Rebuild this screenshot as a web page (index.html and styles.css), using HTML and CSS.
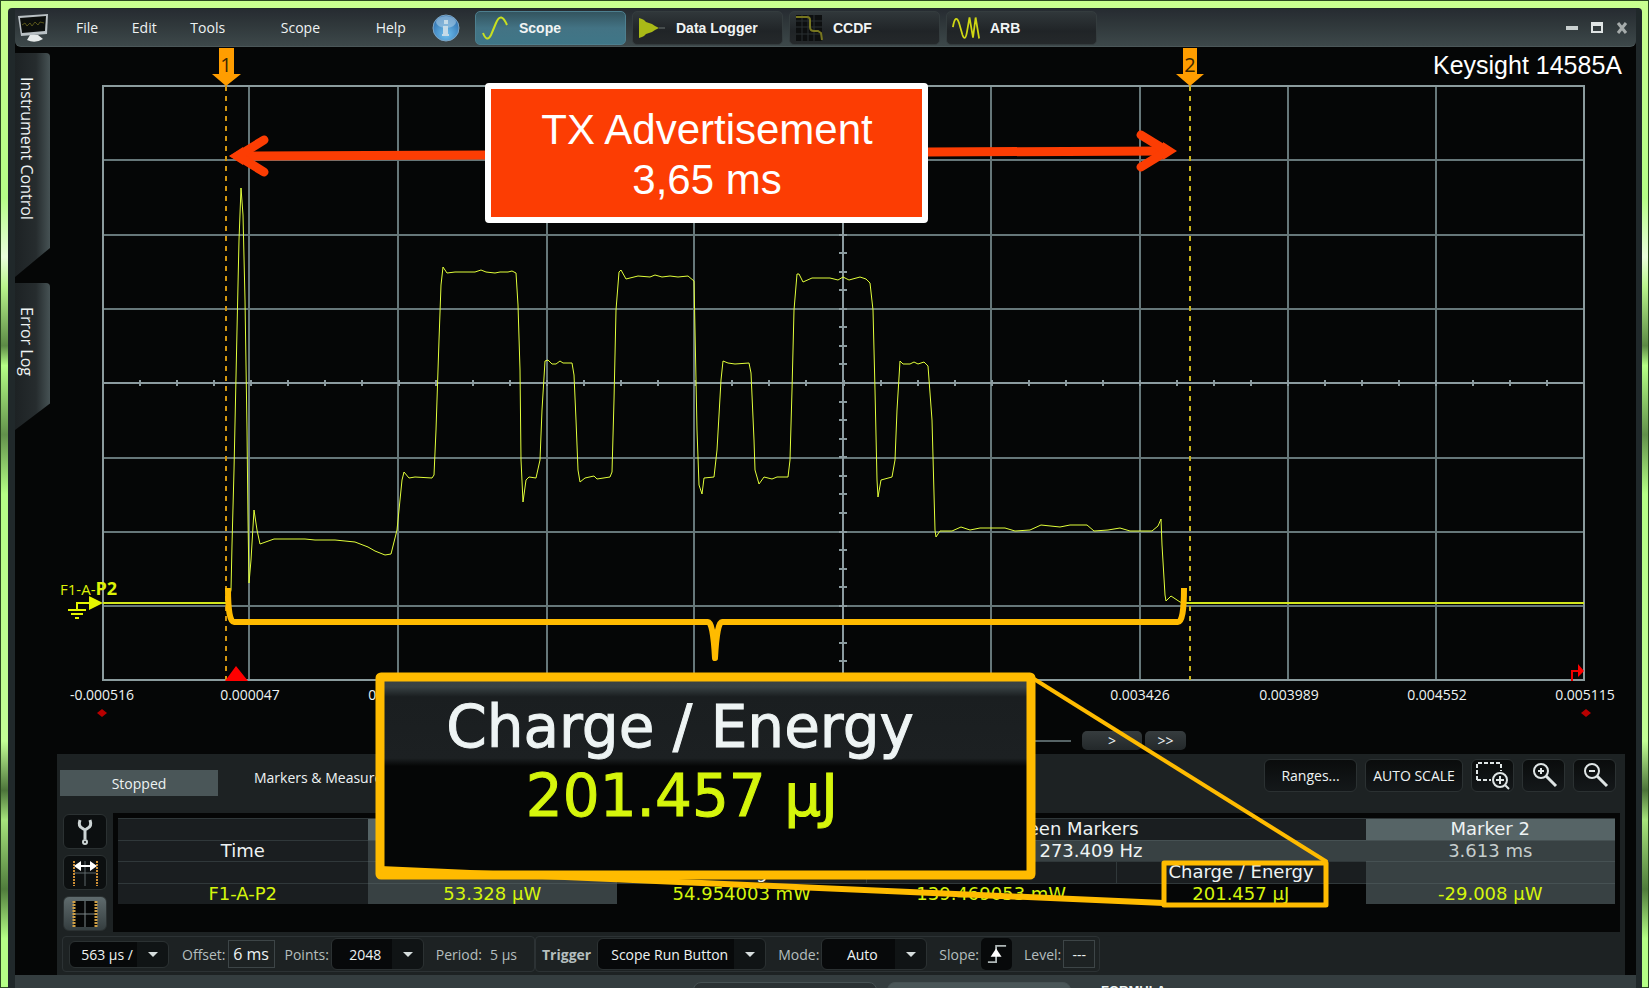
FILE: index.html
```html
<!DOCTYPE html>
<html lang="en">
<head>
  <meta charset="UTF-8">
  <title>Keysight 14585A</title>
  <link rel="stylesheet" href="styles.css">
</head>
<body>
<div class="window">

  <header class="titlebar">
    <svg class="app-icon" viewBox="0 0 32 30">
      <path d="M1 3L31 1L30 21L4 23Z" fill="#b9c0c4"/>
      <path d="M3 5L29 3L28 18L5 20Z" fill="#0c0f0d"/>
      <path d="M5 12l3-2 2 3 3-3 2 3 3-4 3 3 2-3 4 1" fill="none" stroke="#57541a"/>
      <path d="M13 22h8l5 4q-8 5-16 1z" fill="#e6eaea"/>
    </svg>
    <nav class="menu">
      <button>File</button>
      <button>Edit</button>
      <button>Tools</button>
      <button class="wide">Scope</button>
      <button class="wide">Help</button>
    </nav>
    <svg class="info" viewBox="0 0 28 28">
      <defs>
        <radialGradient id="infoFill" cx="50%" cy="75%" r="70%">
          <stop offset="0" stop-color="#6fc0ee"/>
          <stop offset="1" stop-color="#2f6fae"/>
        </radialGradient>
      </defs>
      <circle cx="14" cy="14" r="13" fill="url(#infoFill)" stroke="#7fa6c4"/>
      <ellipse cx="14" cy="8" rx="10" ry="6" fill="#a9cbe4" opacity=".6"/>
      <path d="M12 6h4v4h-4zM11 12h5v8h1v2h-7v-2h1v-6z" fill="#c5dbe8"/>
    </svg>
    <div class="modes">
      <button class="mode active">
        <svg viewBox="0 0 28 28"><path d="M2 19q4 10 8 2L15 9q5-12 11 2" fill="none" stroke="#c8e020" stroke-width="2"/></svg>
        Scope
      </button>
      <button class="mode">
        <svg viewBox="0 0 28 28"><path d="M1 4l3 1 2 1 2 2 3 1 3 1 3 2 4 2-4 2-3 2-3 1-3 1-2 2-2 1-3 1z" fill="#a9ba17"/><path d="M21 14h6" stroke="#6a7270"/></svg>
        Data Logger
      </button>
      <button class="mode">
        <svg viewBox="0 0 28 28"><rect x="1" y="1" width="26" height="26" fill="#0d0f10"/><path d="M7 1v26M13 1v26M19 1v26M1 7h26M1 13h26M1 20h26" stroke="#2b3032"/><path d="M1 3h11q3 0 3 3v7q0 4 4 4h4l3 2 1 7" fill="none" stroke="#77761f" stroke-width="2"/></svg>
        CCDF
      </button>
      <button class="mode">
        <svg viewBox="0 0 32 28"><path d="M1 13Q4-3 8 8l4 14q3 8 5-3l3-17 4 23 3-23 4 24" fill="none" stroke="#cfd814" stroke-width="2"/></svg>
        ARB
      </button>
    </div>
    <div class="window-buttons">
      <button aria-label="Minimize"><svg viewBox="0 0 12 12"><path d="M0 6h12" stroke="#c9d0d0" stroke-width="4"/></svg></button>
      <button aria-label="Maximize"><svg viewBox="0 0 12 12"><path d="M1 1h10v9H1zM1 3h10" fill="none" stroke="#dfe4e4" stroke-width="2"/></svg></button>
      <button aria-label="Close"><svg viewBox="0 0 12 12"><path d="M2 1l8 10M10 1L2 11" stroke="#a5abab" stroke-width="3"/></svg></button>
    </div>
  </header>

  <div class="workspace">
    <aside class="side-tabs">
      <button class="side-tab tall">Instrument Control</button>
      <button class="side-tab">Error Log</button>
    </aside>

    <main class="main">
      <svg class="plot" viewBox="57 47 1568 680">
        <!-- grid -->
        <path class="grid" d="M249 86V680M398 86V680M547 86V680M694 86V680M991 86V680M1140 86V680M1288 86V680M1436 86V680
          M103 160H1584M103 235H1584M103 309H1584M103 458H1584M103 532H1584M103 606H1584"/>
        <rect class="frame" x="103" y="86" width="1481" height="594"/>
        <path class="axis" d="M843 86V680M103 383H1584"/>
        <g id="ticks" class="axis"></g>

        <!-- marker lines -->
        <path class="marker-line" d="M226 86V680"/>
        <path class="marker-line second" d="M1190 86V680"/>

        <!-- power trace -->
        <path class="base" d="M103 603H228M1184 603H1584"/>
        <polyline class="trace" points="228,603 231,590 232,545 234,470 237,330 239,240 241,188 243,215 245,300 247,430 248,520 249,583 251,560 254,510 257,530 260,544
          274,539 305,539 315,540 335,540 355,542 368,547 375,551 385,555 391,554 397,530 402,480 404,472 409,478 415,477 432,478 434,475 436,430 439,340 441,285 443,267
          447,273 455,272 475,272 481,270 486,272 495,273 500,272 508,272 512,271 516,273 518,305 520,370 521,460 523,502 526,480 529,477 536,478 540,460 542,410 545,361 548,360 552,364 556,364 560,361 563,363 572,363
          574,375 576,420 578,470 580,482 585,478 594,476 597,479 610,477 612,472 614,400 616,310 619,272 621,270 626,279 638,276 650,277 655,275 662,277 670,276 678,277 688,276 694,281 695,330 697,430 699,485 702,494 704,478 714,477
          717,450 721,380 723,361 728,363 735,364 749,363 751,373 754,440 755,470 759,484 764,477 772,479 777,477 788,477 790,460 792,390 794,310 797,274 799,274 803,282 812,278
          830,278 838,280 843,277 849,280 860,277 866,279 870,283 873,310 875,390 877,480 878,497 881,480 892,477 895,460 897,410 900,361 903,364 910,364 914,362 918,364 924,362 928,366
          932,420 935,530 936,537 940,531 952,531 961,527 970,530 980,528 1005,528 1015,531 1030,530 1041,525 1060,527 1070,525 1087,525 1094,531 1108,530 1120,528 1130,531 1152,531
          1158,526 1161,519 1162,545 1165,595 1166,601 1171,596 1180,602 1184,603"/>

        <!-- marker flags -->
        <path class="flag" d="M219 48h15v26h7l-15 12-14-12h7z"/>
        <text class="flag-text" x="226" y="72">1</text>
        <path class="flag" d="M1183 48h14v26h7l-14 12-14-12h7z"/>
        <text class="flag-text" x="1190" y="72">2</text>

        <!-- channel ground -->
        <text class="channel" x="60" y="595">F1-A-<tspan class="strong">P2</tspan></text>
        <path class="ground" d="M77 610v-7h13M68 610h18M71 614h12M75 618h4"/>
        <path class="ground-head" d="M89 596l14 7-14 7z"/>

        <path class="red" d="M236 666l12 15h-23zM1578 664l6 7-6 6z"/>
        <path class="red dim" d="M102 709l5 4-5 4-5-4zM1586 709l5 4-5 4-5-4z"/>
        <path class="red-line" d="M1572 681v-10h8"/>

        <g class="axis-labels">
          <text x="102" y="700">-0.000516</text>
          <text x="250" y="700">0.000047</text>
          <text x="398" y="700">0.000610</text>
          <text x="1140" y="700">0.003426</text>
          <text x="1289" y="700">0.003989</text>
          <text x="1437" y="700">0.004552</text>
          <text x="1585" y="700">0.005115</text>
        </g>
        <text class="product" x="1622" y="74">Keysight 14585A</text>
      </svg>

      <div class="scroll-row">
        <span class="track"></span>
        <button class="step long">&gt;</button>
        <button class="step">&gt;&gt;</button>
      </div>

      <section class="panel">
        <div class="panel-head">
          <button class="status">Stopped</button>
          <h2>Markers &amp; Measurements</h2>
          <div class="tools">
            <button class="tool ranges">Ranges...</button>
            <button class="tool auto">AUTO SCALE</button>
            <button class="tool icon" aria-label="Zoom to area"><svg viewBox="0 0 34 30"><path d="M1 19V2h24v8M1 19h14" fill="none" stroke="#dfe5e5" stroke-width="2" stroke-dasharray="4 2"/><circle cx="24" cy="19" r="7" fill="none" stroke="#dfe5e5" stroke-width="2"/><path d="M24 15v8M20 19h8M29 24l4 4" stroke="#dfe5e5" stroke-width="2"/></svg></button>
            <button class="tool icon" aria-label="Zoom in"><svg viewBox="0 0 34 30"><circle cx="14" cy="10" r="7" fill="none" stroke="#dfe5e5" stroke-width="2"/><path d="M14 7v6M11 10h6" stroke="#dfe5e5" stroke-width="2"/><path d="M19 15l10 10" stroke="#dfe5e5" stroke-width="3"/></svg></button>
            <button class="tool icon" aria-label="Zoom out"><svg viewBox="0 0 34 30"><circle cx="14" cy="10" r="7" fill="none" stroke="#dfe5e5" stroke-width="2"/><path d="M11 10h6" stroke="#dfe5e5" stroke-width="2"/><path d="M19 15l10 10" stroke="#dfe5e5" stroke-width="3"/></svg></button>
          </div>
        </div>

        <div class="measure">
          <div class="measure-tools">
            <button aria-label="Setup"><svg viewBox="0 0 30 30"><path d="M10 3q-2 6 2 8l3 2 3-2q4-2 2-8M15 12v10" fill="none" stroke="#cdd5d5" stroke-width="3"/><circle cx="15" cy="25" r="2" fill="none" stroke="#cdd5d5" stroke-width="2"/></svg></button>
            <button aria-label="Place markers"><svg viewBox="0 0 30 30"><path d="M15 3v25M4 15h22" stroke="#5d6769"/><path d="M4 3v25M27 3v25" stroke="#cf8f35" stroke-width="2" stroke-dasharray="2 1"/><path d="M4 8l7-5v4h9V3l7 5-7 5V9h-9v4z" fill="#fff"/></svg></button>
            <button class="on" aria-label="Show markers"><svg viewBox="0 0 30 30"><path d="M4 2h23v26H4z" fill="#050606"/><path d="M15 2v26M4 15h22" stroke="#7c8688"/><path d="M4 2v26M26 2v26" stroke="#cf9f45" stroke-width="3" stroke-dasharray="2 1"/></svg></button>
          </div>
          <div class="table-box">
            <table>
              <tr>
                <th></th><th class="lit">Marker 1</th><th colspan="3">Measurements Between Markers</th><th class="lit">Marker 2</th>
              </tr>
              <tr>
                <th>Time</th><td class="mid">-44.52 µs</td><td class="mid" colspan="3">Δ = 3.658 ms, Freq = 273.409 Hz</td><td class="mid soft">3.613 ms</td>
              </tr>
              <tr>
                <th></th><td class="mid"></td><th>Average</th><th class="split">Maximum</th><th class="split">Charge / Energy</th><td class="mid"></td>
              </tr>
              <tr class="values">
                <th>F1-A-P2</th><td class="mid">53.328 µW</td><td class="dark">54.954003 mW</td><td class="dark">139.469053 mW</td><td class="dark">201.457 µJ</td><td class="mid">-29.008 µW</td>
              </tr>
            </table>
          </div>
        </div>

        <div class="controls">
          <div class="group first">
            <span class="combo scale"><select aria-label="Time per division"><option>563 µs /</option></select></span>
            <label for="offset">Offset:</label><input id="offset" class="offset" value="6 ms">
            <label for="points">Points:</label><span class="combo points"><select id="points"><option>2048</option></select></span>
            <span class="period">Period:</span><span class="period-value">5 µs</span>
          </div>
          <div class="group">
            <label class="bold" for="trigger">Trigger</label><span class="combo trigger"><select id="trigger"><option>Scope Run Button</option></select></span>
            <label for="mode">Mode:</label><span class="combo mode-select"><select id="mode"><option>Auto</option></select></span>
            <label for="slope">Slope:</label><button id="slope" class="slope" aria-label="Slope: rising"><svg viewBox="0 0 22 22"><path d="M1 20h9V2h11" fill="none" stroke="#aeb6b6" stroke-width="2"/><path d="M10 5l6 9H4z" fill="#fff"/></svg></button>
            <label for="level">Level:</label><input id="level" class="level" value="---">
          </div>
        </div>
      </section>
    </main>
  </div>

  <footer class="bottom">
    <span class="stub"></span>
    <span class="stub light"></span>
    <span class="formula">FORMULA</span>
  </footer>
</div>

<!-- call-outs laid over the whole screen -->
<svg class="notes" viewBox="0 0 1649 988">
  <defs>
    <linearGradient id="lens" x1="0" y1="0" x2="0" y2="1">
      <stop offset="0" stop-color="#3a4345"/>
      <stop offset=".05" stop-color="#384143"/>
      <stop offset=".1" stop-color="#1a1e20"/>
      <stop offset=".41" stop-color="#1c2022"/>
      <stop offset=".45" stop-color="#050606"/>
    </linearGradient>
  </defs>
  <path class="arrow" d="M485 155L240 156M928 152L1166 151"/>
  <path class="arrow round" d="M264 140L238 156L264 172M1141 135L1167 151L1141 167"/>
  <path class="tip" d="M229 156l14-9v18zM1177 151l-14-9v18z"/>
  <rect class="tx" x="488" y="86" width="437" height="134" rx="1"/>
  <text class="tx-text" x="707" y="144">TX Advertisement</text>
  <text class="tx-text" x="707" y="194">3,65 ms</text>

  <path class="brace" d="M228 588Q228 622 234 622H708Q713 622 715 658Q717 622 722 622H1178Q1184 622 1184 588"/>

  <rect class="lens" x="380" y="677" width="651" height="198" rx="1" fill="url(#lens)"/>
  <text class="lens-title" x="680" y="747">Charge / Energy</text>
  <text class="lens-value" x="682" y="816">201.457 µJ</text>
  <rect class="pick" x="1164" y="863" width="162" height="42"/>
  <path class="leader" d="M1034 679L1327 862"/>
  <path class="leader thick" d="M380 869L1164 903"/>
</svg>

<script>
  // minor ticks on both centre axes, four per division
  const ticks = document.getElementById('ticks');
  let d = '';
  for (let i = 1; i < 40; i++) {
    const x = Math.round(103 + i * 1481 / 40);
    d += `M${x} 380v6`;
  }
  for (let i = 1; i < 32; i++) {
    const y = Math.round(86 + i * 594 / 32);
    d += `M839 ${y}h8`;
  }
  ticks.innerHTML = `<path d="${d}"/>`;
</script>
</body>
</html>
```
FILE: styles.css
```css
* {
  box-sizing: border-box;
}

body {
  margin: 0;
  height: 100vh;
  overflow: hidden;
  position: relative;
  padding: 8px 7px 0 8px;
  background: linear-gradient(#c9ff90 0, #b5ff86 20%, #eaffdc 26%, #b9f58c 29%, #5c8a45 35%, #b5ff86 37%, #62914b 44%, #b5ff86 50%, #c3ff96 75%, #4c743a 80%, #a6e47c 83%, #507c3c 90%, #b5ff86 95%);
  box-shadow: inset 0 0 0 1px #2b4a20;
  font-family: "Open Sans", "Noto Sans", sans-serif;
  font-size: 14px;
  color: #eef3f3;
}

button, select, input {
  font: inherit;
  color: inherit;
  border: 0;
  padding: 0;
  margin: 0;
  background: none;
}

.window {
  display: flex;
  flex-direction: column;
  min-height: 100%;
  border: solid #20282a;
  border-width: 1px 6px 0 7px;
  border-radius: 4px 4px 0 0;
  background: #050606;
}

/* title bar */
.titlebar {
  display: flex;
  align-items: center;
  flex: none;
  height: 38px;
  padding: 0 8px 0 2px;
  background: linear-gradient(#262b31, #2f373a 40%, #3d484a);
  border-bottom: 1px solid #4b5759;
  border-radius: 0 0 6px 6px;
}

.app-icon {
  width: 32px;
  height: 30px;
}

.menu {
  display: flex;
  justify-content: space-between;
  width: 330px;
  margin-left: 27px;
}

.menu .wide {
  margin-left: 22px;
}

.info {
  width: 28px;
  height: 28px;
  margin-left: 26px;
}

.modes {
  display: flex;
  gap: 6px;
  margin-left: 15px;
}

.mode {
  display: flex;
  align-items: center;
  gap: 10px;
  width: 151px;
  height: 34px;
  padding-left: 5px;
  border-radius: 5px;
  background: linear-gradient(#30373a, #202427 60%, #25292b);
  border: 1px solid #343c3e;
  font: bold 14px "Liberation Sans", Arial, sans-serif;
  color: #f1f4f4;
}

.mode svg {
  width: 28px;
  height: 28px;
}

.mode.active {
  background: linear-gradient(#33545f, #437384 50%, #3f7687);
  border-color: #4d7f8f;
}

.window-buttons {
  display: flex;
  gap: 13px;
  margin-left: auto;
}

.window-buttons svg {
  display: block;
  width: 12px;
  height: 12px;
}

/* side tabs */
.workspace {
  display: grid;
  grid-template-columns: 42px 1fr;
  padding-right: 11px;
}

.side-tabs {
  display: flex;
  flex-direction: column;
  gap: 6px;
  padding-top: 6px;
}

.side-tab {
  width: 35px;
  height: 147px;
  padding-top: 24px;
  padding-right: 12px;
  writing-mode: vertical-rl;
  text-align: left;
  line-height: 20px;
  background: linear-gradient(90deg, #1d2224, #262c2e 60%, #465254);
  border-radius: 0 4px 0 0;
  clip-path: polygon(0 0, 100% 0, 100% 82%, 0 100%);
  font-size: 16px;
}

.side-tab.tall {
  height: 224px;
  clip-path: polygon(0 0, 100% 0, 100% 87%, 0 100%);
}

/* plot */
.main {
  min-width: 0;
}

.plot {
  display: block;
  width: 100%;
}

.grid, .frame, .axis {
  fill: none;
  stroke: #667779;
  stroke-width: 2;
}

.frame {
  stroke: #8b9b9d;
}

.axis {
  stroke: #8b9b9f;
}

.marker-line {
  stroke: #d3960f;
  stroke-width: 2;
  stroke-dasharray: 5 5;
}

.marker-line.second {
  stroke: #c9b21c;
}

.trace {
  fill: none;
  stroke: #e2ff3a;
  stroke-width: 1;
  stroke-linejoin: round;
}

.base {
  stroke: #d2e51c;
  stroke-width: 2;
}

.flag {
  fill: #ff9d00;
}

.flag-text {
  font-size: 20px;
  text-anchor: middle;
  fill: #3b2600;
}

.channel {
  font-size: 15px;
  fill: #ddf207;
}

.channel .strong {
  font-size: 18px;
  font-weight: bold;
}

.ground {
  fill: none;
  stroke: #e4f500;
  stroke-width: 2;
}

.ground-head {
  fill: #e4f500;
}

.red {
  fill: #f00;
}

.red.dim {
  fill: #b80000;
}

.red-line {
  fill: none;
  stroke: #e00;
  stroke-width: 2;
}

.axis-labels {
  font-size: 14px;
  text-anchor: middle;
  fill: #eef3f3;
}

.product {
  font: 25px "Liberation Sans", Arial, sans-serif;
  text-anchor: end;
  fill: #fff;
}

.scroll-row {
  display: flex;
  align-items: center;
  justify-content: flex-end;
  gap: 3px;
  height: 27px;
  padding-right: 28%;
}

.track {
  width: 400px;
  height: 2px;
  margin-right: 8px;
  background: #566365;
}

.step {
  width: 41px;
  height: 19px;
  line-height: 17px;
  border-radius: 5px;
  background: linear-gradient(#363c3e, #23282a);
  font-size: 14px;
}

.step.long {
  width: 60px;
}

/* lower panel */
.panel {
  height: 221px;
  padding: 0 5px 0 3px;
  background: #1d2223;
}

.panel-head {
  display: flex;
  height: 59px;
}

.status {
  width: 158px;
  height: 26px;
  margin-top: 16px;
  background: #4a5658;
}

.panel-head h2 {
  margin: 14px 0 0 36px;
  font-size: 14px;
  line-height: 20px;
  font-weight: normal;
}

.tools {
  display: flex;
  gap: 8px;
  margin: 5px 4px 0 auto;
}

.tool {
  height: 33px;
  border: 1px solid #2b3132;
  border-radius: 6px;
  background: linear-gradient(#0a0c0c, #14181a);
}

.tool.ranges {
  width: 93px;
}

.tool.auto {
  width: 98px;
}

.tool.icon {
  width: 43px;
}

.tool svg {
  display: block;
  width: 34px;
  height: 30px;
  margin: auto;
}

.measure {
  display: flex;
  height: 119px;
}

.measure-tools {
  display: flex;
  flex-direction: column;
  justify-content: space-between;
  width: 44px;
  margin: 1px 6px 1px 3px;
}

.measure-tools button {
  height: 35px;
  border: 1px solid #2b3132;
  border-radius: 6px;
  background: #0c0f10;
}

.measure-tools .on {
  background: linear-gradient(#5f6b6d, #353e40);
}

.measure-tools svg {
  display: block;
  width: 30px;
  height: 30px;
  margin: auto;
}

.table-box {
  flex: 1;
  padding: 5px;
  background: #050606;
}

table {
  width: 100%;
  height: 86px;
  table-layout: fixed;
  border-collapse: collapse;
  font: 18px "DejaVu Sans", Verdana, sans-serif;
  line-height: 20px;
}

th, td {
  padding: 0;
  font-weight: normal;
  text-align: center;
  white-space: nowrap;
  border-top: 1px solid #30383a;
  background: #1a1e20;
}

.lit {
  background: #566466;
}

.mid {
  background: #384143;
  border-color: #465153;
}

.soft {
  color: #c5cdcd;
}

.dark {
  background: #050606;
}

.split {
  border-left: 1px solid #30383a;
}

.values {
  color: #d5f50c;
}

/* controls */
.controls {
  display: flex;
  padding: 4px 0 0 2px;
}

.group {
  display: flex;
  align-items: center;
  height: 36px;
  padding: 0 4px 0 6px;
  border: 1px solid #2c3234;
  border-radius: 4px;
  color: #b4bebe;
}

.group select, .group input {
  color: #eef3f3;
}

.combo {
  position: relative;
  height: 32px;
  border: 1px solid #2b3132;
  border-radius: 6px;
  background: linear-gradient(90deg, #07090a calc(100% - 31px), #101415 0);
}

.combo::after {
  content: "";
  position: absolute;
  right: 10px;
  top: 13px;
  border: 5px solid transparent;
  border-top-color: #d6dddd;
  border-bottom: 0;
  pointer-events: none;
}

.combo select {
  appearance: none;
  width: 100%;
  height: 100%;
  padding-right: 24px;
  text-align-last: center;
}

.combo.scale { width: 100px; height: 27px; margin-right: 13px; }
.combo.scale::after { top: 10px; }
.combo.points { width: 93px; margin-left: 2px; }
.combo.trigger { width: 169px; margin: 0 12px 0 6px; }
.combo.mode-select { width: 106px; margin: 0 12px 0 2px; }

.group input {
  height: 28px;
  border: 1px solid #3d4547;
  text-align: center;
}

.group .offset {
  width: 47px;
  margin: 0 10px 0 2px;
  font-size: 16px;
}

.group .level {
  width: 32px;
  margin-left: 2px;
}

.period {
  margin: 0 8px 0 12px;
}

.group.first {
  width: 473px;
}

.bold {
  font-weight: bold;
}

.slope {
  width: 31px;
  height: 32px;
  margin: 0 12px 0 2px;
  border-radius: 5px;
  background: #07090a;
}

.slope svg {
  display: block;
  width: 20px;
  height: 20px;
  margin: auto;
}

/* strip under the panel */
.bottom {
  display: flex;
  align-items: flex-start;
  gap: 10px;
  flex: 1;
  padding: 7px 0 0 678px;
  background: #343d3f;
}

.stub {
  width: 184px;
  height: 24px;
  border: 1px solid #465153;
  border-radius: 8px 8px 0 0;
  background: #2a3133;
}

.stub.light {
  background: #4a5658;
}

.formula {
  margin-left: 20px;
  font: bold 13px "Liberation Sans", Arial, sans-serif;
  line-height: 18px;
}

/* call-outs */
.notes {
  position: absolute;
  top: 0;
  left: 0;
  width: 100%;
  pointer-events: none;
}

.arrow {
  fill: none;
  stroke: #fc3d03;
  stroke-width: 9;
}

.arrow.round {
  stroke-linecap: round;
}

.tip {
  fill: #fc3d03;
}

.tx {
  fill: #fc3d03;
  stroke: #fff;
  stroke-width: 6;
  stroke-linejoin: round;
}

.tx-text {
  font: 42px "Liberation Sans", Arial, sans-serif;
  text-anchor: middle;
  fill: #fff;
}

.brace {
  fill: none;
  stroke: #ffbb00;
  stroke-width: 6;
  stroke-linejoin: round;
}

.lens {
  stroke: #ffbb00;
  stroke-width: 9;
}

.lens-title, .lens-value {
  font: 58px "DejaVu Sans", Verdana, sans-serif;
  text-anchor: middle;
  fill: #eef4f4;
  stroke: #eef4f4;
  stroke-width: 1;
}

.lens-value {
  fill: #d5f50c;
  stroke: #d5f50c;
}

.pick {
  fill: none;
  stroke: #ffbb00;
  stroke-width: 5;
  stroke-linejoin: round;
}

.leader {
  stroke: #ffbb00;
  stroke-width: 4;
}

.leader.thick {
  stroke-width: 6;
}
```
